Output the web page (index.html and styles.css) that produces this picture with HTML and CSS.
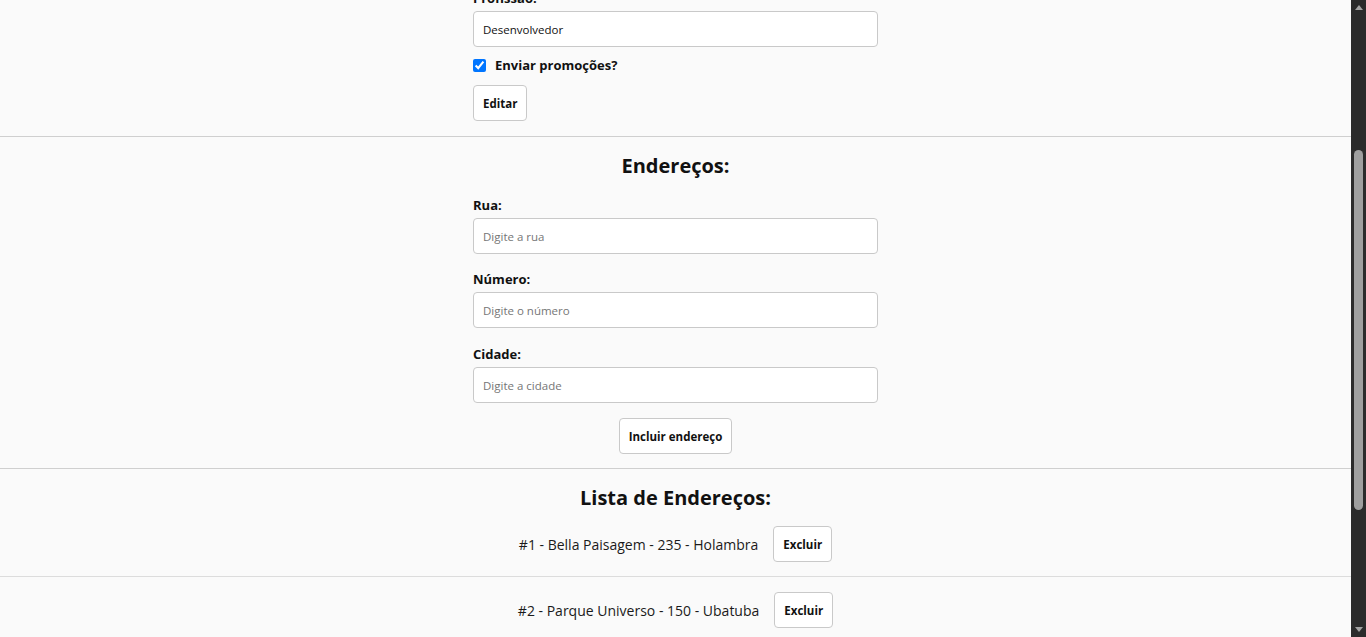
FILE: index.html
```html
<!DOCTYPE html>
<html lang="pt-BR">
<head>
<meta charset="utf-8">
<title>Cadastro</title>
<link rel="stylesheet" href="styles.css">
</head>
<body>
<div class="frame">
  <main class="viewport">
    <div class="page">
      <section class="section section-top">
        <div class="form">
          <label class="label" for="prof">Profissão:</label>
          <input class="field" id="prof" type="text" value="Desenvolvedor">
          <label class="check">
            <input type="checkbox" checked>
            <span>Enviar promoções?</span>
          </label>
          <div class="actions-left">
            <button class="btn" type="button">Editar</button>
          </div>
        </div>
      </section>

      <section class="section">
        <h2 class="title">Endereços:</h2>
        <div class="form">
          <label class="label" for="rua">Rua:</label>
          <input class="field field-tight" id="rua" type="text" placeholder="Digite a rua">
          <label class="label" for="num">Número:</label>
          <input class="field" id="num" type="text" placeholder="Digite o número">
          <label class="label" for="cid">Cidade:</label>
          <input class="field" id="cid" type="text" placeholder="Digite a cidade">
          <div class="actions-center">
            <button class="btn" type="button">Incluir endereço</button>
          </div>
        </div>
      </section>

      <section class="section list-section">
        <h2 class="title">Lista de Endereços:</h2>
        <ul class="list">
          <li class="item">
            <span class="item-text">#1 - Bella Paisagem - 235 - Holambra</span>
            <button class="btn" type="button">Excluir</button>
          </li>
          <li class="item">
            <span class="item-text">#2 - Parque Universo - 150 - Ubatuba</span>
            <button class="btn" type="button">Excluir</button>
          </li>
        </ul>
      </section>
    </div>
  </main>
  <div class="scrollbar" aria-hidden="true">
    <div class="arrow arrow-up"></div>
    <div class="track"><div class="thumb"></div></div>
    <div class="arrow arrow-down"></div>
  </div>
</div>
</body>
</html>
```

FILE: styles.css
```css
* { box-sizing: border-box; }
html, body {
  margin: 0;
  padding: 0;
  height: 100%;
  overflow: hidden;
}
body {
  background: #fafafa;
  color: #111;
  font-family: "Open Sans", "Noto Sans", sans-serif;
}
.frame {
  display: flex;
  height: 637px;
}
.viewport {
  flex: 1;
  overflow: hidden;
}
.page {
  margin-top: -12px;
}
.section {
  border-bottom: 1px solid #cfcfcf;
  padding-bottom: 14px;
}
.section-top { padding-bottom: 15px; }
.form {
  width: 405px;
  margin: 0 auto;
  display: flex;
  flex-direction: column;
}
.label {
  display: block;
  font-size: 13px;
  font-weight: 700;
  line-height: 20px;
  margin-bottom: 3px;
}
.field {
  height: 36px;
  width: 100%;
  border: 1px solid #c9c9c9;
  border-radius: 4px;
  background: #fff;
  padding: 0 9px;
  font-family: inherit;
  font-size: 11.5px;
  color: #111;
  margin-bottom: 16px;
  outline: none;
}
.field-tight { margin-bottom: 15px; }
.field::placeholder { color: #767676; }
#prof { margin-bottom: 8px; }
.check {
  display: flex;
  align-items: center;
  gap: 9px;
  height: 20px;
  font-size: 13px;
  font-weight: 700;
  margin-bottom: 10px;
}
.check input {
  margin: 0;
  width: 13px;
  height: 13px;
}
.actions-left { display: flex; }
.actions-center {
  display: flex;
  justify-content: center;
  margin-top: -1px;
}
.btn {
  height: 36px;
  padding: 0 9px;
  background: #fff;
  border: 1px solid #c9c9c9;
  border-radius: 4px;
  font-family: inherit;
  font-size: 11.5px;
  font-weight: 700;
  color: #111;
}
.title {
  margin: 15px 0 15px;
  font-size: 20px;
  line-height: 28px;
  font-weight: 700;
  text-align: center;
}
.list-section {
  border-bottom: none;
  padding-bottom: 0;
}
.list-section .title { margin-bottom: 0; }
.list {
  list-style: none;
  margin: 0;
  padding: 0;
}
.item {
  display: flex;
  justify-content: center;
  align-items: center;
  gap: 15px;
  padding: 14px 0;
  border-bottom: 1px solid #dcdcdc;
}
.item + .item { padding-top: 15px; }
.item-text {
  font-size: 14px;
  color: #1a1a1a;
}
.scrollbar {
  width: 15px;
  background: #2b2b2b;
  display: flex;
  flex-direction: column;
  align-items: center;
}
.arrow {
  width: 0;
  height: 0;
  border-left: 4px solid transparent;
  border-right: 4px solid transparent;
}
.arrow-up {
  margin-top: 5px;
  border-bottom: 5px solid #a3a3a3;
}
.arrow-down {
  margin-bottom: 5px;
  border-top: 5px solid #a3a3a3;
}
.track {
  flex: 1;
  width: 100%;
  display: flex;
  justify-content: center;
  padding-top: 140px;
  padding-bottom: 117px;
}
.thumb {
  width: 9px;
  background: #9f9f9f;
  border-radius: 5px;
}
```
